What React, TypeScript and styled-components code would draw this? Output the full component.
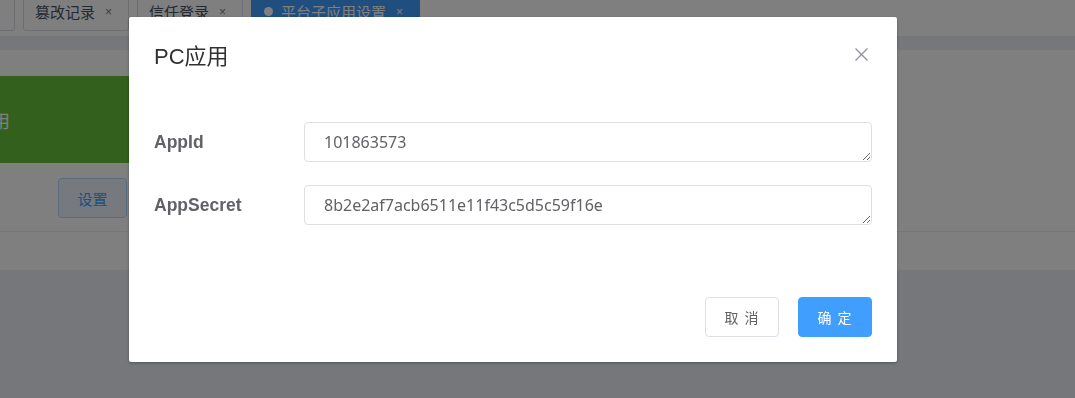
import React from 'react';
import styled, { createGlobalStyle } from 'styled-components';

const GlobalStyle = createGlobalStyle`
  html, body {
    margin: 0;
    padding: 0;
    background: #eceef5;
    font-family: 'Liberation Sans', 'Noto Sans CJK SC', sans-serif;
    overflow: hidden;
  }
`;

const CJK = `'Liberation Sans', 'Noto Sans CJK SC', sans-serif`;

interface TabItem {
  label: string;
  closable?: boolean;
  active?: boolean;
  width?: number;
}

interface TabProps {
  $active?: boolean;
  $offset?: number;
  $width?: number;
}

const Page = styled.div`
  width: 1075px;
  height: 398px;
  background: #eceef5;
  overflow: hidden;
`;

const TabBar = styled.div`
  height: 36px;
  background: #ffffff;
  display: flex;
  align-items: flex-start;
  gap: 8px;
  overflow: visible;
`;

const Tab = styled.div<TabProps>`
  margin-top: -8px;
  height: 39px;
  box-sizing: border-box;
  display: flex;
  align-items: center;
  padding: 0 16px 0 11px;
  width: ${(p) => (p.$width ? `${p.$width}px` : 'auto')};
  margin-left: ${(p) => (p.$offset ? `${p.$offset}px` : '0')};
  border: 1px solid ${(p) => (p.$active ? '#409eff' : '#d8dce5')};
  border-radius: 0 0 3px 3px;
  background: ${(p) => (p.$active ? '#409eff' : '#ffffff')};
  color: ${(p) => (p.$active ? '#ffffff' : '#495060')};
  font-family: ${CJK};
  font-size: 15px;
  white-space: nowrap;
`;

const TabDot = styled.span`
  width: 9px;
  height: 9px;
  border-radius: 50%;
  background: #ffffff;
  margin: 0 8px 0 1px;
`;

const TabClose = styled.span<{ $active?: boolean }>`
  margin-left: 10px;
  font-size: 12px;
  line-height: 1;
  color: ${(p) => (p.$active ? '#ffffff' : '#7a7f8a')};
`;

const Panel = styled.div`
  margin-top: 14px;
  height: 220px;
  background: #ffffff;
  padding-top: 26px;
  box-sizing: border-box;
`;

const Card = styled.div`
  margin-left: -200px;
  width: 620px;
  height: 87px;
  background: #67c23a;
  display: flex;
  align-items: center;
  padding-left: 149px;
  box-sizing: border-box;
  color: #ffffff;
  font-family: ${CJK};
  font-size: 18px;
`;

const ActionRow = styled.div`
  display: flex;
  padding: 15px 0 13px 58px;
  border-bottom: 1px solid #ebeef5;
`;

const PlainButton = styled.button`
  height: 40px;
  width: 69px;
  border: 1px solid #b3d8ff;
  border-radius: 4px;
  background: #ecf5ff;
  color: #409eff;
  font-family: ${CJK};
  font-size: 15px;
  padding: 0;
`;

const Mask = styled.div`
  position: fixed;
  inset: 0;
  background: rgba(0, 0, 0, 0.5);
`;

const DialogWrapper = styled.div`
  position: fixed;
  inset: 0;
  padding: 17px 0 0 129px;
`;

const Dialog = styled.div`
  position: relative;
  width: 768px;
  background: #ffffff;
  border-radius: 2px;
  box-shadow: 0 1px 3px rgba(0, 0, 0, 0.3);
`;

const DialogHeader = styled.div`
  padding: 25px 25px 10px;
`;

const DialogTitle = styled.span`
  display: block;
  font-family: ${CJK};
  font-size: 22px;
  line-height: 30px;
  color: #303133;
`;

const CloseButton = styled.button`
  position: absolute;
  top: 30px;
  right: 28px;
  width: 15px;
  height: 15px;
  padding: 0;
  border: none;
  background: transparent;
  display: flex;
  align-items: center;
  justify-content: center;
`;

const DialogBody = styled.div`
  padding: 40px 25px 49px 25px;
`;

const FormItem = styled.div`
  display: flex;
  align-items: center;
  margin-bottom: 23px;
`;

const Label = styled.label`
  width: 150px;
  flex-shrink: 0;
  font-family: 'Liberation Sans', Arial, sans-serif;
  font-weight: bold;
  font-size: 17.5px;
  line-height: 40px;
  color: #606266;
`;

const TextArea = styled.textarea`
  flex: 1;
  height: 40px;
  box-sizing: border-box;
  padding: 8px 19px;
  border: 1px solid #dcdfe6;
  border-radius: 4px;
  font-family: 'Noto Sans', sans-serif;
  font-size: 16px;
  line-height: 22px;
  color: #606266;
  resize: vertical;
  outline: none;
  overflow: hidden;
`;

const DialogFooter = styled.div`
  display: flex;
  justify-content: flex-end;
  gap: 19px;
  padding: 0 25px 25px;
`;

const FooterButton = styled.button<{ $primary?: boolean }>`
  width: 74px;
  height: 40px;
  padding: 0;
  border-radius: 4px;
  border: 1px solid ${(p) => (p.$primary ? '#409eff' : '#dcdfe6')};
  background: ${(p) => (p.$primary ? '#409eff' : '#ffffff')};
  color: ${(p) => (p.$primary ? '#ffffff' : '#606266')};
  font-family: ${CJK};
  font-size: 14px;
  letter-spacing: 1px;
`;

const tabs: TabItem[] = [
  { label: '', width: 62 },
  { label: '篡改记录', closable: true },
  { label: '信任登录', closable: true },
  { label: '平台子应用设置', closable: true, active: true },
];

const fields = [
  { label: 'AppId', value: '101863573' },
  { label: 'AppSecret', value: '8b2e2af7acb6511e11f43c5d5c59f16e' },
];

const CloseIcon: React.FC = () => (
  <svg width="13" height="13" viewBox="0 0 13 13">
    <path d="M0.5 0.5 L12.5 12.5 M12.5 0.5 L0.5 12.5" stroke="#909399" strokeWidth="1.3" fill="none" />
  </svg>
);

const App: React.FC = () => {
  return (
    <>
      <GlobalStyle />
      <Page>
        <TabBar>
          {tabs.map((tab, i) => (
            <Tab
              key={i}
              $active={tab.active}
              $width={tab.width}
              $offset={i === 0 ? -47 : undefined}
            >
              {tab.active && <TabDot />}
              {tab.label}
              {tab.closable && <TabClose $active={tab.active}>×</TabClose>}
            </Tab>
          ))}
        </TabBar>
        <Panel>
          <Card>PC应用</Card>
          <ActionRow>
            <PlainButton>设置</PlainButton>
          </ActionRow>
        </Panel>
      </Page>
      <Mask />
      <DialogWrapper>
        <Dialog>
          <DialogHeader>
            <DialogTitle>PC应用</DialogTitle>
            <CloseButton>
              <CloseIcon />
            </CloseButton>
          </DialogHeader>
          <DialogBody>
            {fields.map((f) => (
              <FormItem key={f.label}>
                <Label>{f.label}</Label>
                <TextArea readOnly rows={1} value={f.value} />
              </FormItem>
            ))}
          </DialogBody>
          <DialogFooter>
            <FooterButton>取 消</FooterButton>
            <FooterButton $primary>确 定</FooterButton>
          </DialogFooter>
        </Dialog>
      </DialogWrapper>
    </>
  );
};

export default App;
